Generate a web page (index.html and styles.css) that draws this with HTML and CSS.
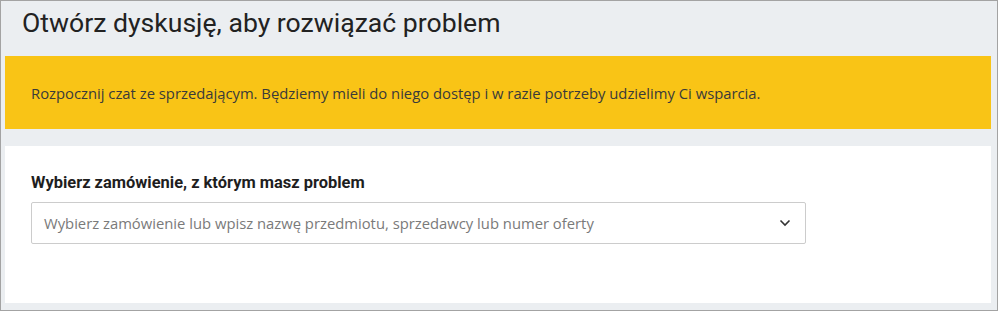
FILE: index.html
```html
<!DOCTYPE html>
<html lang="pl">
<head>
    <meta charset="UTF-8">
    <meta name="viewport" content="width=device-width, initial-scale=1.0">
    <title>Otwórz dyskusję</title>
    <link rel="stylesheet" href="styles.css">
</head>
<body>
    <div class="frame">
        <h1 class="title">Otwórz dyskusję, aby rozwiązać problem</h1>
        <div class="notice">
            Rozpocznij czat ze sprzedającym. Będziemy mieli do niego dostęp i w razie potrzeby udzielimy Ci wsparcia.
        </div>
        <div class="card">
            <label class="label" for="orderSelect">Wybierz zamówienie, z którym masz problem</label>
            <div class="select" id="orderSelect">
                <span class="placeholder">Wybierz zamówienie lub wpisz nazwę przedmiotu, sprzedawcy lub numer oferty</span>
                <svg class="chevron" width="12" height="8" viewBox="0 0 12 8">
                    <path d="M1.5 1.5 L6 6 L10.5 1.5" fill="none" stroke="#333" stroke-width="1.6"/>
                </svg>
            </div>
        </div>
    </div>
</body>
</html>
```

FILE: styles.css
```css
body {
    margin: 0;
    font-family: "Open Sans", sans-serif;
}
.frame {
    height: 311px;
    box-sizing: border-box;
    border: 1px solid #a3a3a3;
    background: #ebeef1;
    padding: 0 6px 0 4px;
    display: flex;
    flex-direction: column;
}
.title {
    margin: 0;
    height: 55px;
    padding: 6px 0 0 17px;
    box-sizing: border-box;
    font-family: Roboto, sans-serif;
    font-weight: 400;
    font-size: 26.6px;
    color: #222;
}
.notice {
    height: 73px;
    box-sizing: border-box;
    background: #f9c416;
    color: #3a3a3a;
    font-size: 14.8px;
    padding: 0 26px;
    display: flex;
    align-items: center;
}
.card {
    margin-top: 17px;
    height: 157px;
    box-sizing: border-box;
    background: #ffffff;
    padding: 27px 26px 0 26px;
}
.label {
    display: block;
    font-family: Roboto, sans-serif;
    font-weight: 700;
    font-size: 16.45px;
    color: #1e1e1e;
    margin-bottom: 10px;
}
.select {
    width: 775px;
    height: 42px;
    box-sizing: border-box;
    border: 1px solid #cccccc;
    border-radius: 2px;
    display: flex;
    align-items: center;
    justify-content: space-between;
    padding: 0 14px 0 12px;
}
.placeholder {
    font-size: 14.8px;
    color: #7a7a7a;
}
.chevron {
    display: block;
}
```
